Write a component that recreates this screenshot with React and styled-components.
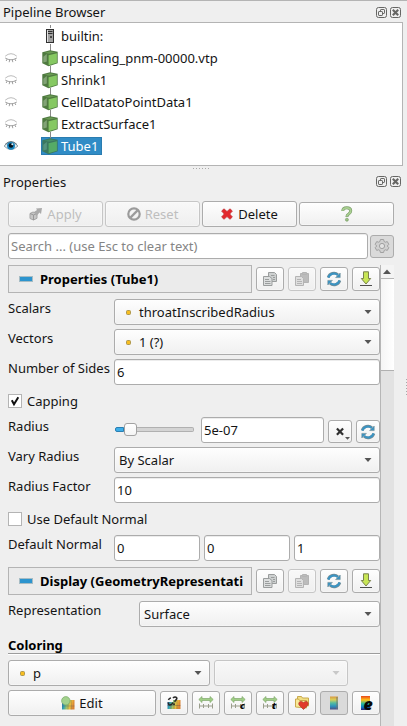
import React from "react";
import styled, { createGlobalStyle, css } from "styled-components";

const Global = createGlobalStyle`
  * { box-sizing: border-box; }
  html, body { margin: 0; background: #efefef; overflow: hidden; }
  body { font: 13px/18px "Noto Sans", sans-serif; color: #141414; }
  svg { display: block; flex: none; overflow: visible; }
`;

const Window = styled.div`
  width: 407px;
  height: 726px;
  display: flex;
  background: #efefef;
  border-top: 1px solid #b4b4b4;
  overflow: hidden;
`;
const Dock = styled.div`
  width: 403px;
  display: flex;
  flex-direction: column;
`;
const Edge = styled.div`
  width: 4px;
  padding: 378px 0 0 3px;
`;
const TitleBar = styled.div`
  height: ${(p) => p.$h}px;
  display: flex;
  align-items: center;
  gap: 3px;
  padding: ${(p) => p.$top}px 2px 0 3px;
  span { flex: 1; white-space: nowrap; }
`;
const Tree = styled.div`
  height: 144px;
  background: #fff;
  border: 1px solid #b4b4b4;
  border-left: 0;
  padding-top: 2px;
`;
const TreeRow = styled.div`
  height: 22px;
  display: flex;
  align-items: center;
  padding-left: 3px;
`;
const EyeSlot = styled.div`
  width: 38px;
`;
const NodeItem = styled.div`
  display: flex;
  align-items: center;
  height: 18px;
  gap: 3px;
  padding: 0 4px 0 1px;
  white-space: nowrap;
  ${(p) => p.$selected && css`
    height: 18px;
    background: #308cc6;
    color: #fff;
    box-shadow: inset 0 0 0 1px #2a7cb0;
  `}
`;
const Splitter = styled.div`
  height: 5px;
  display: flex;
  justify-content: center;
  padding-top: 2px;
`;
const Body = styled.div`
  padding-left: 8px;
  width: 394px;
`;
const Row = styled.div`
  display: flex;
  align-items: ${(p) => p.$align || "center"};
  gap: ${(p) => p.$gap ?? 4}px;
  height: ${(p) => p.$h || 26}px;
  margin-bottom: ${(p) => p.$mb ?? 4}px;
`;
const raised = css`
  border: 1px solid #acacac;
  border-radius: 3px;
  background: linear-gradient(#fefefe, #f0f0f0);
  box-shadow: inset 0 0 0 1px rgba(255, 255, 255, 0.35);
`;
const Button = styled.button`
  ${raised}
  display: flex;
  align-items: center;
  justify-content: center;
  gap: ${(p) => p.$gap ?? 4}px;
  width: ${(p) => p.$w || 95}px;
  height: ${(p) => p.$h || 26}px;
  padding: 0;
  font: inherit;
  color: ${(p) => (p.disabled ? "#bebebe" : "#141414")};
  ${(p) => p.disabled && css`border-color: #c6c6c6; background: linear-gradient(#f8f8f8, #efefef);`}
  ${(p) => p.$pressed && css`background: #dadada; box-shadow: none;`}
`;
const Field = styled.div`
  width: ${(p) => p.$w || 266}px;
  height: 26px;
  flex: none;
  border: 1px solid #acacac;
  border-radius: 3px;
  background: #fff;
  box-shadow: inset 0 1px 0 #ececec;
  padding: 3px 2px 0;
  color: ${(p) => (p.$muted ? "#858585" : "#141414")};
  white-space: nowrap;
`;
const Select = styled.div`
  ${raised}
  width: ${(p) => p.$w || 266}px;
  height: 26px;
  flex: none;
  display: flex;
  align-items: center;
  padding: 0 7px 0 ${(p) => (p.$dot ? 11 : 4)}px;
  span { flex: 1; padding-left: ${(p) => (p.$dot ? 8 : 0)}px; white-space: nowrap; }
  ${(p) => p.$off && css`border-color: #c6c6c6; background: linear-gradient(#f8f8f8, #efefef);`}
`;
const Label = styled.div`
  width: ${(p) => p.$w || 102}px;
  height: 18px;
  white-space: nowrap;
`;
const Scroll = styled.div`
  display: flex;
  height: 461px;
`;
const Form = styled.div`
  width: 372px;
`;
const Bar = styled.div`
  width: 14px;
  background: #e2e2e2;
  border-left: 1px solid #b6b6b6;
`;
const BarArrow = styled.div`
  height: 14px;
  background: #f4f4f4;
  border-bottom: 1px solid #b6b6b6;
  padding: 4px 0 0 2px;
`;
const Thumb = styled.div`
  height: 92px;
  background: linear-gradient(90deg, #f5f5f5, #fff);
  border-bottom: 1px solid #b0b0b0;
`;
const Section = styled.div`
  width: 244px;
  height: 28px;
  border: 1px solid #b4b4b4;
  background: #ebebeb;
  display: flex;
  align-items: center;
  gap: 7px;
  padding: 0 0 0 10px;
  font-weight: 700;
  color: #000;
  white-space: nowrap;
`;
const CheckBox = styled.div`
  width: 14px;
  height: 14px;
  border: 1px solid #b4b4b4;
  background: #fff;
`;
const SliderBox = styled.div`
  width: 83px;
  height: 26px;
  display: flex;
  align-items: center;
  padding-left: 1px;
  margin-right: 4px;
  padding-bottom: 1px;
`;
const SliderFill = styled.div`
  width: 9px;
  height: 5px;
  border: 1px solid #2b7fb2;
  border-radius: 2px 0 0 2px;
  background: #3daee9;
`;
const Knob = styled.div`
  width: 13px;
  height: 13px;
  border: 1px solid #a2a2a2;
  border-radius: 3px;
  background: linear-gradient(#fff, #f4f4f4);
`;
const Groove = styled.div`
  width: 57px;
  height: 5px;
  border: 1px solid #b0b0b0;
  border-left: 0;
  border-radius: 0 2px 2px 0;
  background: #d4d4d4;
`;
const Heading = styled.div`
  height: 19px;
  line-height: 20px;
  margin: 8px 0 6px;
  font-weight: 700;
  color: #000;
  border-bottom: 1px solid #9c9c9c;
  box-shadow: 0 1px 0 #fff;
`;

const FloatIcon = () => (
  <svg width="11" height="11" viewBox="0 0 11 11" fill="none" stroke="#666664">
    <rect x=".5" y=".5" width="10" height="10" rx="2" />
    <rect x="4.5" y="2.5" width="4" height="4" rx=".6" />
    <rect x="2.5" y="4.5" width="4" height="4" rx=".6" fill="#efefef" />
  </svg>
);
const CloseIcon = () => (
  <svg width="11" height="11" viewBox="0 0 11 11" fill="none" stroke="#666664">
    <rect x=".5" y=".5" width="10" height="10" rx="2" />
    <path d="M2.8 2.8l5.4 5.4M8.2 2.8L2.8 8.2" strokeWidth="2.1" />
  </svg>
);
const ClosedEye = () => (
  <svg width="16" height="16" viewBox="0 0 16 16" fill="none" stroke="#a0a0a0">
    <path d="M2.2 6.2Q8 1.2 13.8 6.2" stroke="#bcbcbc" />
    <path d="M2.2 8Q8 11.6 13.8 8M4 9.2L3.2 11M6.6 10l-.4 2.2M9.4 10l.4 2.2M12 9.2l.8 1.8" />
  </svg>
);
const OpenEye = () => (
  <svg width="16" height="16" viewBox="0 0 16 16">
    <path d="M1 8Q8 .5 15 8Q8 15 1 8z" fill="#e5eef2" stroke="#96a4aa" />
    <circle cx="8" cy="7.8" r="4" fill="#1783bd" />
    <circle cx="8" cy="7.5" r="2.3" fill="#07131b" />
    <circle cx="9.3" cy="6.3" r="1" fill="#d7eef7" />
    <path d="M2 6.5Q8 .5 14 6.5" fill="none" stroke="#667780" />
  </svg>
);
const Cube = ({ selected }) => (
  <svg width="16" height="22" viewBox="0 0 16 22">
    <path d={selected ? "M8.5 0v4" : "M8.5 0v4M8.5 19v3"} stroke="#8a8a8a" />
    <path d="M.3 5.2L8 3.2l7.7 1.6v11.4l-9.2 3L.3 16.2z" fill={selected ? "#3b785f" : "#4f7a40"} />
    <path d="M1.3 9.8L4.8 7v7.6l-3.5.8z" fill={selected ? "#5c9a87" : "#8fae83"} opacity=".8" />
    <path d="M2.6 5.7L8.2 4.2l5.4 1-6.5 1.5z" fill={selected ? "#468d68" : "#6a9a53"} />
    <path d="M6.6 8.2l8.3-2v9.6l-8.3 2.5z" fill={selected ? "#55ab66" : "#86c862"} />
  </svg>
);
const Server = () => (
  <svg width="16" height="22" viewBox="0 0 16 22">
    <path d="M8.5 0v3M8.5 19v3" stroke="#8a8a8a" />
    <rect x="4.5" y="4.5" width="7" height="13" fill="#a2a2a2" stroke="#303030" />
    <path d="M5.5 5v12" stroke="#e0e0e0" />
    <path d="M6 6.5h4.5M6 8.5h4.5" stroke="#303030" />
    <rect x="8" y="11" width="2" height="2" fill="#484848" />
  </svg>
);
const ApplyIcon = () => (
  <svg width="14" height="14" viewBox="0 0 14 14">
    <path d="M1 6.5L4 5l4 1.5v4.8L4.5 13 1 11.5z" fill="#c6c6c6" stroke="#a5a5a5" />
    <path d="M1 6.5L4.5 8v5M4.5 8L8 6.5" fill="none" stroke="#999" />
    <path d="M5 5l3-2-1-1.5L13 1l-1 6-1.5-1.5L7.5 9z" fill="#aaa" />
  </svg>
);
const ResetIcon = () => (
  <svg width="14" height="14" viewBox="0 0 14 14" fill="none" stroke="#9b9b9b" strokeWidth="2.2">
    <circle cx="7" cy="7" r="5.7" />
    <path d="M3.4 10.6l7.2-7.2" />
  </svg>
);
const DeleteIcon = () => (
  <svg width="12" height="12" viewBox="0 0 12 12">
    <path d="M3 .8L6 3.5 9 .8 11.4 3 8.8 6l2.6 3L9 11.3 6 8.6l-3 2.7L.6 9l2.6-3L.6 3z" fill="#e3272c" stroke="#bd3438" strokeWidth=".7" />
  </svg>
);
const HelpIcon = () => (
  <svg width="12" height="16" viewBox="0 0 12 16" fill="none">
    <path d="M1.8 5Q1.8 1.8 5.8 1.8q3.9 0 3.9 3 0 2-2 3.2Q5.9 9 5.9 11" stroke="#7c9e6c" strokeWidth="3" />
    <path d="M1.8 4.7Q2 1.8 5.8 1.8q3.9 0 3.9 3 0 2-2 3.2Q5.9 9 5.9 10.6" stroke="#a8cf90" strokeWidth="1.8" />
    <circle cx="5.9" cy="13.7" r="1.5" fill="#9bc383" stroke="#7c9e6c" strokeWidth=".7" />
  </svg>
);
const GearIcon = () => (
  <svg width="16" height="16" viewBox="0 0 16 16" fill="#d0d0d0" stroke="#a0a0a0">
    <path d="M6.4 1.5h3.2l.5 2 1.2.7 2-.6 1.5 2.7L13.3 8l1.5 1.7-1.5 2.7-2-.6-1.2.7-.5 2H6.4l-.5-2-1.2-.7-2 .6-1.5-2.7L2.7 8 1.2 6.3l1.5-2.7 2 .6 1.2-.7z" />
    <circle cx="8" cy="8" r="2.6" fill="#e2e2e2" />
  </svg>
);
const CopyIcon = () => (
  <svg width="16" height="16" viewBox="0 0 16 16" fill="#cdd0d0" stroke="#9a9d9d">
    <path d="M6.5 1.5h6l2 2v7h-8z" />
    <path d="M9 4.5h3.5M11 6.5h2M11 8.5h2" />
    <path d="M1.5 5.5h6l2.5 2v7H1.5z" fill="#dcdede" />
    <path d="M3 8.5h4M3 10.5h5.5M3 12.5h5.5" />
  </svg>
);
const PasteIcon = () => (
  <svg width="16" height="16" viewBox="0 0 16 16" fill="#bcbcbc" stroke="#b4b4b4">
    <path d="M6.5 2.5h8v9h-8z" /><path d="M8.5 1.5h4v2h-4z" />
    <path d="M1.5 5.5h6l2 2v7h-8z" fill="#dedede" />
    <path d="M3 8.5h4M3 10.5h5M3 12.5h5" />
  </svg>
);
const RefreshIcon = () => (
  <svg width="16" height="16" viewBox="0 0 16 16">
    <path d="M2.2 6.5A6 6 0 0 1 12 3.8M13.8 9.5A6 6 0 0 1 4 12.2" fill="none" stroke="#738b94" strokeWidth="2.8" />
    <path d="M2.3 6.6A5.9 5.9 0 0 1 11.8 4M13.7 9.4A5.9 5.9 0 0 1 4.2 12" fill="none" stroke="#3994c4" strokeWidth="1.9" />
    <path d="M14.2 2v4.6H9.6zM1.8 14V9.4h4.6z" fill="#3994c4" stroke="#738b94" strokeWidth=".6" />
  </svg>
);
const DownIcon = () => (
  <svg width="16" height="16" viewBox="0 0 16 16">
    <path d="M5.5.8h5v6.7h2.2L8 13 3.3 7.5h2.2z" fill="#c8e655" stroke="#7a824f" />
    <path d="M2 14.5h12" stroke="#4e4e4e" />
  </svg>
);
const Minus = () => (
  <svg width="14" height="6" viewBox="0 0 14 6"><rect x=".5" y=".5" width="13" height="5" fill="#2c94ce" stroke="#a6bcc4" /></svg>
);
const Dot = () => (
  <svg width="5" height="5" viewBox="0 0 5 5"><rect x=".5" y=".5" width="4" height="4" rx="1" fill="#f7bd20" stroke="#ad974f" /></svg>
);
const Caret = ({ color = "#555" }) => (
  <svg width="8" height="5" viewBox="0 0 8 5"><path d="M.5 0h7L4 4z" fill={color} /></svg>
);
const Tick = () => (
  <svg width="12" height="12" viewBox="0 0 12 12"><path d="M2.8 5.2L5 9.2 9.3 2.3" fill="none" stroke="#111" strokeWidth="2" /></svg>
);
const ClearIcon = () => (
  <svg width="22" height="22" viewBox="0 0 22 22">
    <path d="M7.9 7.4l6.2 6.4M14.1 7.4l-6.2 6.4" stroke="#303030" strokeWidth="2.2" />
    <path d="M16 16h5l-2.5 2.8z" fill="#555" />
  </svg>
);
const Spectrum = ({ id, vertical }) => (
  <linearGradient id={id} x1="0" y1="0" x2={vertical ? "0" : "1"} y2={vertical ? "1" : ".2"}>
    {(vertical
      ? ["#d99a40", "#d9cf59", "#54bca0", "#2d91bd", "#514c82"]
      : ["#3c5ca0", "#2ba1b4", "#9bc16a", "#f0bf3c", "#d88235"]
    ).map((c, i) => <stop key={c} offset={i / 4} stopColor={c} />)}
  </linearGradient>
);
const EditIcon = () => (
  <svg width="14" height="14" viewBox="0 0 14 14">
    <defs><Spectrum id="edit" /></defs>
    <path d="M1 7h6V4h6.5v9.5H1z" fill="url(#edit)" />
    <path d="M7 4v9.5M10.3 4v9.5M1 10h12.5" stroke="#555" strokeOpacity=".3" />
    <circle cx="4.8" cy="4.8" r="4.2" fill="#a2d18c" stroke="#78a969" strokeWidth=".7" />
  </svg>
);
const SeparateIcon = () => (
  <svg width="16" height="16" viewBox="0 0 16 16">
    <defs><Spectrum id="sep" /></defs>
    <path d="M1.5 7H7V5h7.5v9h-13z" fill="url(#sep)" />
    <path d="M5 8v6M8 7v7M11 5v9M1.5 10.5h13" stroke="#444" strokeOpacity=".3" />
    <path d="M2.5 5q.6-2 2.5-2M7 3q1.5-1.5 3-.8t.3 2.4L8.5 6.8M2.5 7.5q-.4 2.5 1.5 2.5t3-2.5" fill="none" stroke="#292929" strokeWidth="1.6" />
    <circle cx="8" cy="9.2" r=".9" fill="#222" />
  </svg>
);
const IconLetter = styled.text`
  font: italic 900 ${(p) => p.$size || 9}px "Noto Sans", sans-serif;
  fill: #080808;
`;
const RangeIcon = ({ letter }) => (
  <svg width="16" height="16" viewBox="0 0 16 16">
    <path d="M.8 4.5L4 1.5v2h8v-2l3.2 3L12 7.5v-2H4v2z" fill="#a0ce86" stroke="#7fa86c" strokeWidth=".7" />
    <path d="M1.5 8.5v5M5.5 9v4M10.5 9v4M14.5 8.5v5M1 11h14" stroke="#9a9d8c" />
    {letter && <IconLetter x="10" y="14">{letter}</IconLetter>}
  </svg>
);
const FavoriteIcon = () => (
  <svg width="16" height="16" viewBox="0 0 16 16">
    <path d="M3.5 4V1.5h4l1 1.5h6v8h-11z" fill="#f1de82" stroke="#c9a94d" />
    <path d="M1.5 12V4h3l1 1.5h7V13z" fill="#f8e998" stroke="#c9a94d" />
    <path d="M9.5 14.5l-4.3-4.3C3.5 7 7.3 4.8 9.5 7.8 11.7 4.8 15.5 7 13.8 10.2z" fill="#e13b2c" stroke="#ae3d2c" strokeWidth=".7" />
  </svg>
);
const LegendIcon = () => (
  <svg width="16" height="16" viewBox="0 0 16 16">
    <defs><Spectrum id="legend" vertical /></defs>
    <rect x="4" y="1.5" width="8" height="13" fill="url(#legend)" />
    <path d="M11 2v12" stroke="#737573" strokeOpacity=".5" strokeWidth="2" />
  </svg>
);
const EditLegendIcon = () => (
  <svg width="16" height="16" viewBox="0 0 16 16">
    <defs>
      <linearGradient id="rainbow" x1="0" y1="0" x2="0" y2="1">
        <stop offset="0" stopColor="#e9451c" /><stop offset=".28" stopColor="#ffc118" />
        <stop offset=".55" stopColor="#28ba9c" /><stop offset=".8" stopColor="#0878cd" /><stop offset="1" stopColor="#302070" />
      </linearGradient>
    </defs>
    <rect x="3" y="1" width="9" height="14" fill="url(#rainbow)" />
    <IconLetter x="5.5" y="14.5" $size="16">e</IconLetter>
  </svg>
);
const Dots = ({ vertical }) => (
  <svg width={vertical ? 1 : 17} height={vertical ? 17 : 1}>
    <path d={vertical ? "M.5 0v17" : "M0 .5h17"} stroke="#a9a9a9" strokeDasharray="1 2" />
  </svg>
);

const DockTitle = ({ children, h, top = 2 }) => (
  <TitleBar $h={h} $top={top}><span>{children}</span><FloatIcon /><CloseIcon /></TitleBar>
);
const Combo = ({ w, dot, children }) => (
  <Select $w={w} $dot={dot}>{dot && <Dot />}<span>{children}</span><Caret /></Select>
);
const SectionRow = ({ title, mb }) => (
  <Row $h={28} $mb={mb}>
    <Section><Minus />{title}</Section>
    <Button $w={28} $h={24}><CopyIcon /></Button>
    <Button $w={28} $h={24} disabled><PasteIcon /></Button>
    <Button $w={28} $h={24}><RefreshIcon /></Button>
    <Button $w={28} $h={24}><DownIcon /></Button>
  </Row>
);
const FormRow = ({ label, w = 106, mb, children }) => (
  <Row $gap={0} $mb={mb} $align="flex-start"><Label $w={w}>{label}</Label>{children}</Row>
);

const nodes = ["upscaling_pnm-00000.vtp", "Shrink1", "CellDatatoPointData1", "ExtractSurface1"];

export default function App() {
  return (
    <>
      <Global />
      <Window>
        <Dock>
          <DockTitle h={21} top={1}>Pipeline Browser</DockTitle>
          <Tree>
            <TreeRow><EyeSlot /><NodeItem><Server />builtin:</NodeItem></TreeRow>
            {nodes.map((n) => (
              <TreeRow key={n}><EyeSlot><ClosedEye /></EyeSlot><NodeItem><Cube />{n}</NodeItem></TreeRow>
            ))}
            <TreeRow><EyeSlot><OpenEye /></EyeSlot><NodeItem $selected><Cube selected />Tube1</NodeItem></TreeRow>
          </Tree>
          <Splitter><Dots /></Splitter>
          <DockTitle h={20} top={1}>Properties</DockTitle>
          <Body>
            <Row $gap={2} $h={46} $mb={-4}>
              <Button disabled><ApplyIcon />Apply</Button>
              <Button disabled><ResetIcon />Reset</Button>
              <Button $gap={5}><DeleteIcon />Delete</Button>
              <Button $h={24}><HelpIcon /></Button>
            </Row>
            <Row $gap={2} $mb={6}>
              <Field $w={360} $muted>Search ... (use Esc to clear text)</Field>
              <Button $w={24} $h={23} $pressed><GearIcon /></Button>
            </Row>
            <Scroll>
              <Form>
                <SectionRow title="Properties (Tube1)" mb={6} />
                <FormRow label="Scalars"><Combo dot>throatInscribedRadius</Combo></FormRow>
                <FormRow label="Vectors"><Combo dot>1 (?)</Combo></FormRow>
                <FormRow label="Number of Sides" mb={6}><Field>6</Field></FormRow>
                <Row $h={20} $gap={5} $mb={6}><CheckBox><Tick /></CheckBox>Capping</Row>
                <FormRow label="Radius">
                  <SliderBox><SliderFill /><Knob /><Groove /></SliderBox>
                  <Row $mb={0} $align="flex-end">
                    <Field $w={123} $mr>5e-07</Field>
                    <Button $w={24} $h={23}><ClearIcon /></Button>
                    <Button $w={24} $h={23}><RefreshIcon /></Button>
                  </Row>
                </FormRow>
                <FormRow label="Vary Radius"><Combo>By Scalar</Combo></FormRow>
                <FormRow label="Radius Factor" mb={6}><Field>10</Field></FormRow>
                <Row $h={20} $gap={5} $mb={6}><CheckBox />Use Default Normal</Row>
                <FormRow label="Default Normal" mb={6}>
                  <Row $mb={0}><Field $w={86}>0</Field><Field $w={86}>0</Field><Field $w={86}>1</Field></Row>
                </FormRow>
                <SectionRow title="Display (GeometryRepresentati" mb={6} />
                <FormRow label="Representation" w={131} mb={0}><Combo w={241}>Surface</Combo></FormRow>
                <Heading>Coloring</Heading>
                <Row>
                  <Combo w={202} dot>p</Combo>
                  <Select $w={134} $off><span /><Caret color="#c8c8c8" /></Select>
                </Row>
                <Row>
                  <Button $w={148}><EditIcon />Edit</Button>
                  <Button $w={28} $h={24}><SeparateIcon /></Button>
                  <Button $w={28} $h={24}><RangeIcon /></Button>
                  <Button $w={28} $h={24}><RangeIcon letter="c" /></Button>
                  <Button $w={28} $h={24}><RangeIcon letter="t" /></Button>
                  <Button $w={28} $h={24}><FavoriteIcon /></Button>
                  <Button $w={28} $h={24} $pressed><LegendIcon /></Button>
                  <Button $w={28} $h={24}><EditLegendIcon /></Button>
                </Row>
              </Form>
              <Bar>
                <BarArrow><svg width="8" height="5"><path d="M0 5l4-4.5L8 5z" fill="#555" /></svg></BarArrow>
                <Thumb />
              </Bar>
            </Scroll>
          </Body>
        </Dock>
        <Edge><Dots vertical /></Edge>
      </Window>
    </>
  );
}
